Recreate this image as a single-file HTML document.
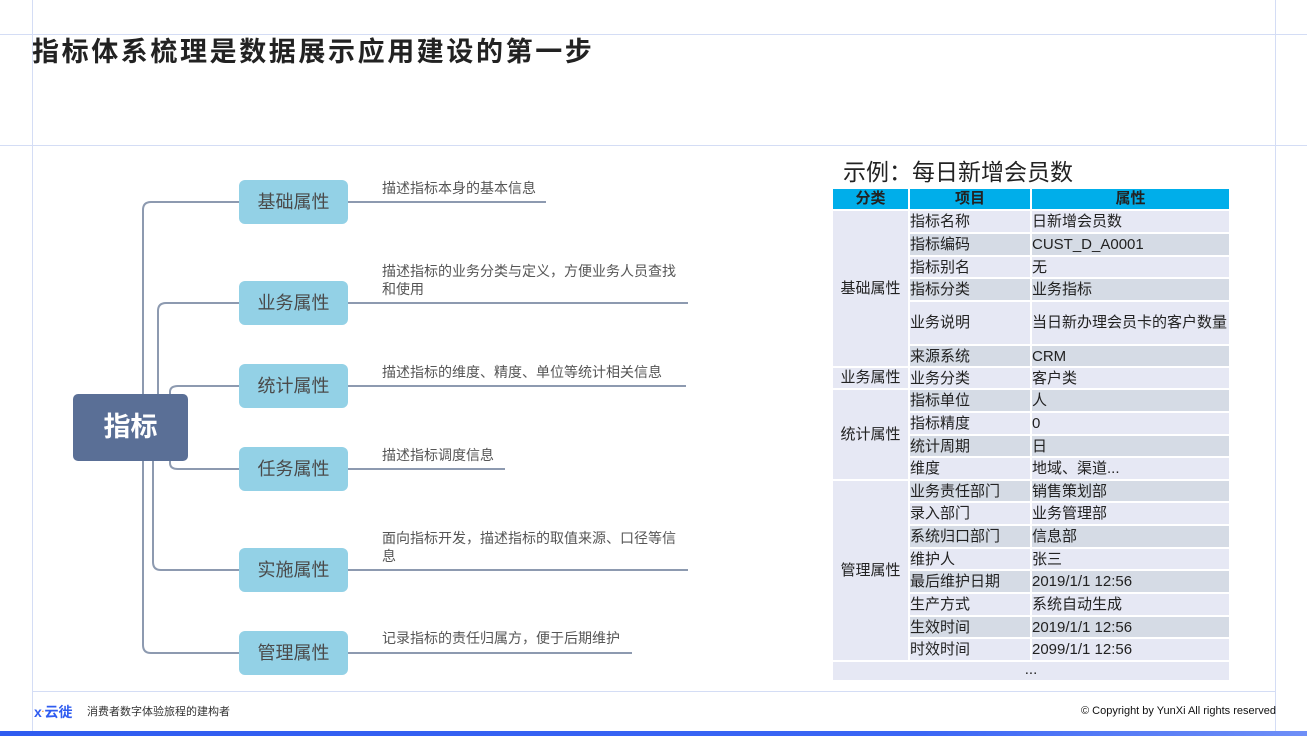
<!DOCTYPE html>
<html><head><meta charset="utf-8"><style>
*{margin:0;padding:0;box-sizing:border-box}
body{width:1307px;height:736px;position:relative;overflow:hidden;background:#fff;font-family:"Liberation Sans","Noto Sans CJK SC",sans-serif}
.a{position:absolute}
.vl{position:absolute;width:1px;background:#d4ddf5}
.hl{position:absolute;height:1px;background:#d4ddf5}
.box{position:absolute;left:239px;width:109px;height:44px;background:#93d1e6;border-radius:6px;color:#4a4a4a;font-size:18px;text-align:center;line-height:44px}
.desc{position:absolute;left:382px;font-size:14px;line-height:18px;color:#555;width:302px}
.c{position:absolute;font-size:15px;color:#222;line-height:21px;white-space:nowrap}
</style></head><body>
<div class="vl" style="left:32px;top:0;height:736px"></div>
<div class="vl" style="left:1275px;top:0;height:736px"></div>
<div class="hl" style="left:0;top:34px;width:1307px"></div>
<div class="hl" style="left:0;top:145px;width:1307px"></div>
<div class="hl" style="left:32px;top:691px;width:1244px"></div>
<div class="a" style="left:0;top:731px;width:1307px;height:5px;background:linear-gradient(90deg,#2f5cf0,#3b66f5 70%,#6f8ff7)"></div>

<div class="a" style="left:32px;top:34px;font-size:27px;font-weight:bold;color:#222;line-height:36px;letter-spacing:2.6px;white-space:nowrap">指标体系梳理是数据展示应用建设的第一步</div>

<svg class="a" style="left:0;top:0" width="720" height="690">
<g fill="none" stroke="#8d9ab0" stroke-width="2">
<path d="M143 394 V210 Q143 202 151 202 H239"/>
<path d="M143 461 V645 Q143 653 151 653 H239"/>
<path d="M158 394 V311 Q158 303 166 303 H239"/>
<path d="M153 461 V562 Q153 570 161 570 H239"/>
<path d="M170 394 V392 Q170 386 178 386 H239"/>
<path d="M170 461 V463 Q170 469 178 469 H239"/>
<path d="M347 202 H546"/><path d="M347 303 H688"/><path d="M347 386 H686"/>
<path d="M347 469 H505"/><path d="M347 570 H688"/><path d="M347 653 H632"/>
</g>
<path d="M726 412 H758 V395 L792 426 L758 457 V440 H726 Z" fill="#00aeea" stroke="#111" stroke-width="1.3"/>
</svg>
<div class="a" style="left:73px;top:394px;width:115px;height:67px;background:#5a6f96;border-radius:5px;color:#fff;font-size:27px;font-weight:bold;text-align:center;line-height:67px">指标</div>
<div class="box" style="top:180px">基础属性</div>
<div class="box" style="top:281px">业务属性</div>
<div class="box" style="top:364px">统计属性</div>
<div class="box" style="top:447px">任务属性</div>
<div class="box" style="top:548px">实施属性</div>
<div class="box" style="top:631px">管理属性</div>
<div class="desc" style="top:179px">描述指标本身的基本信息</div>
<div class="desc" style="top:262px">描述指标的业务分类与定义，方便业务人员查找和使用</div>
<div class="desc" style="top:363px">描述指标的维度、精度、单位等统计相关信息</div>
<div class="desc" style="top:446px">描述指标调度信息</div>
<div class="desc" style="top:529px">面向指标开发，描述指标的取值来源、口径等信息</div>
<div class="desc" style="top:629px">记录指标的责任归属方，便于后期维护</div>

<div class="a" style="left:843px;top:153px;font-size:23px;color:#222">示例：每日新增会员数</div>

<div class="a" style="left:833px;top:189px;width:75px;height:20px;background:#00aeea;font-weight:bold;font-size:15px;text-align:center;line-height:20px;color:#222">分类</div>
<div class="a" style="left:910px;top:189px;width:120px;height:20px;background:#00aeea;font-weight:bold;font-size:15px;text-align:center;line-height:20px;color:#222">项目</div>
<div class="a" style="left:1032px;top:189px;width:197px;height:20px;background:#00aeea;font-weight:bold;font-size:15px;text-align:center;line-height:20px;color:#222">属性</div>

<div class="a" style="left:833px;top:211px;width:75px;height:155px;background:#e6e8f4;font-size:15px;text-align:center;line-height:155px;color:#222">基础属性</div>
<div class="a" style="left:833px;top:368px;width:75px;height:20px;background:#e6e8f4;font-size:15px;text-align:center;line-height:20px;color:#222">业务属性</div>
<div class="a" style="left:833px;top:390px;width:75px;height:89px;background:#e6e8f4;font-size:15px;text-align:center;line-height:89px;color:#222">统计属性</div>
<div class="a" style="left:833px;top:481px;width:75px;height:179px;background:#e6e8f4;font-size:15px;text-align:center;line-height:179px;color:#222">管理属性</div>
<div class="a" style="left:833px;top:662px;width:396px;height:18px;background:#e6e8f4;font-size:15px;text-align:center;line-height:16px;color:#222">...</div>

<div class="c" style="left:910px;top:211px;width:120px;height:21px;background:#e6e8f4">指标名称</div><div class="c" style="left:1032px;top:211px;width:197px;height:21px;background:#e6e8f4">日新增会员数</div>
<div class="c" style="left:910px;top:234px;width:120px;height:21px;background:#d5dbe5">指标编码</div><div class="c" style="left:1032px;top:234px;width:197px;height:21px;background:#d5dbe5">CUST_D_A0001</div>
<div class="c" style="left:910px;top:257px;width:120px;height:20px;background:#e6e8f4">指标别名</div><div class="c" style="left:1032px;top:257px;width:197px;height:20px;background:#e6e8f4">无</div>
<div class="c" style="left:910px;top:279px;width:120px;height:21px;background:#d5dbe5">指标分类</div><div class="c" style="left:1032px;top:279px;width:197px;height:21px;background:#d5dbe5">业务指标</div>
<div class="c" style="left:910px;top:302px;width:120px;height:42px;line-height:42px;background:#e6e8f4">业务说明</div><div class="c" style="left:1032px;top:302px;width:197px;height:42px;line-height:42px;background:#e6e8f4;overflow:hidden">当日新办理会员卡的客户数量</div>
<div class="c" style="left:910px;top:346px;width:120px;height:20px;background:#d5dbe5">来源系统</div><div class="c" style="left:1032px;top:346px;width:197px;height:20px;background:#d5dbe5">CRM</div>
<div class="c" style="left:910px;top:368px;width:120px;height:20px;background:#e6e8f4">业务分类</div><div class="c" style="left:1032px;top:368px;width:197px;height:20px;background:#e6e8f4">客户类</div>
<div class="c" style="left:910px;top:390px;width:120px;height:21px;background:#d5dbe5">指标单位</div><div class="c" style="left:1032px;top:390px;width:197px;height:21px;background:#d5dbe5">人</div>
<div class="c" style="left:910px;top:413px;width:120px;height:21px;background:#e6e8f4">指标精度</div><div class="c" style="left:1032px;top:413px;width:197px;height:21px;background:#e6e8f4">0</div>
<div class="c" style="left:910px;top:436px;width:120px;height:20px;background:#d5dbe5">统计周期</div><div class="c" style="left:1032px;top:436px;width:197px;height:20px;background:#d5dbe5">日</div>
<div class="c" style="left:910px;top:458px;width:120px;height:21px;background:#e6e8f4">维度</div><div class="c" style="left:1032px;top:458px;width:197px;height:21px;background:#e6e8f4">地域、渠道...</div>
<div class="c" style="left:910px;top:481px;width:120px;height:20px;background:#d5dbe5">业务责任部门</div><div class="c" style="left:1032px;top:481px;width:197px;height:20px;background:#d5dbe5">销售策划部</div>
<div class="c" style="left:910px;top:503px;width:120px;height:21px;background:#e6e8f4">录入部门</div><div class="c" style="left:1032px;top:503px;width:197px;height:21px;background:#e6e8f4">业务管理部</div>
<div class="c" style="left:910px;top:526px;width:120px;height:21px;background:#d5dbe5">系统归口部门</div><div class="c" style="left:1032px;top:526px;width:197px;height:21px;background:#d5dbe5">信息部</div>
<div class="c" style="left:910px;top:549px;width:120px;height:20px;background:#e6e8f4">维护人</div><div class="c" style="left:1032px;top:549px;width:197px;height:20px;background:#e6e8f4">张三</div>
<div class="c" style="left:910px;top:571px;width:120px;height:21px;background:#d5dbe5">最后维护日期</div><div class="c" style="left:1032px;top:571px;width:197px;height:21px;background:#d5dbe5">2019/1/1 12:56</div>
<div class="c" style="left:910px;top:594px;width:120px;height:21px;background:#e6e8f4">生产方式</div><div class="c" style="left:1032px;top:594px;width:197px;height:21px;background:#e6e8f4">系统自动生成</div>
<div class="c" style="left:910px;top:617px;width:120px;height:20px;background:#d5dbe5">生效时间</div><div class="c" style="left:1032px;top:617px;width:197px;height:20px;background:#d5dbe5">2019/1/1 12:56</div>
<div class="c" style="left:910px;top:639px;width:120px;height:21px;background:#e6e8f4">时效时间</div><div class="c" style="left:1032px;top:639px;width:197px;height:21px;background:#e6e8f4">2099/1/1 12:56</div>

<div class="a" style="left:34px;top:703px;font-size:14px;font-weight:bold;color:#2f5cf0;line-height:18px">x<span style="color:#f08a24;font-size:8px;vertical-align:top">·</span>云徙</div>
<div class="a" style="left:87px;top:705px;font-size:11px;color:#333;line-height:14px">消费者数字体验旅程的建构者</div>
<div class="a" style="left:1081px;top:704px;font-size:11px;color:#111;line-height:14px;white-space:nowrap">© Copyright by YunXi All rights reserved</div>
</body></html>
